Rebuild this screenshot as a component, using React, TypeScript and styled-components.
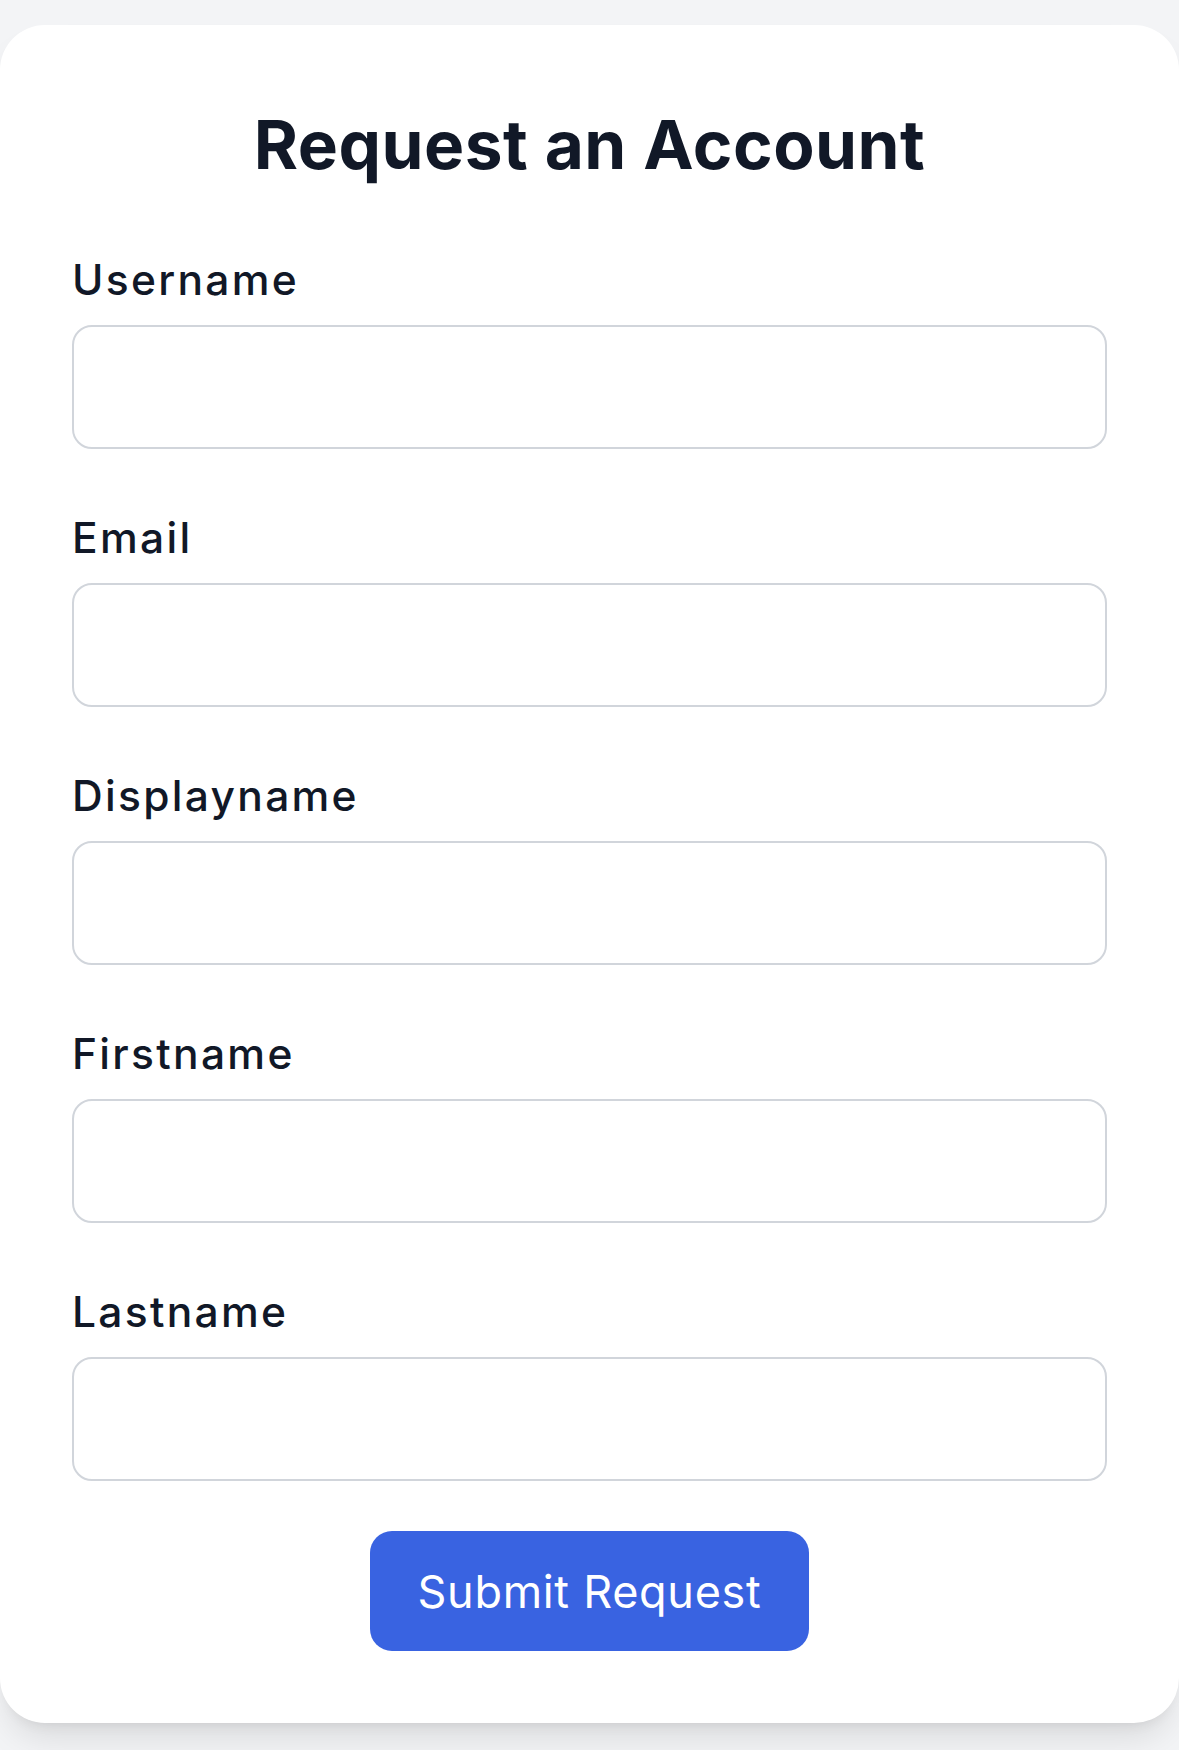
import React from 'react';
import styled, { createGlobalStyle } from 'styled-components';

const GlobalStyle = createGlobalStyle`
  html, body {
    margin: 0;
    padding: 0;
    background-color: #f3f4f6;
    font-family: Inter, "Noto Sans", "Liberation Sans", sans-serif;
  }
  * {
    box-sizing: border-box;
  }
`;

const fields = ['Username', 'Email', 'Displayname', 'Firstname', 'Lastname'];

const App: React.FC = () => {
  return (
    <>
      <GlobalStyle />
      <Page>
        <Card>
          <Title>Request an Account</Title>
          <Form onSubmit={(e) => e.preventDefault()}>
            <Fields>
              {fields.map((name) => (
                <Field key={name}>
                  <Label htmlFor={name.toLowerCase()}>{name}</Label>
                  <Input id={name.toLowerCase()} type={name === 'Email' ? 'email' : 'text'} />
                </Field>
              ))}
            </Fields>
            <ButtonRow>
              <SubmitButton type="submit">Submit Request</SubmitButton>
            </ButtonRow>
          </Form>
        </Card>
      </Page>
    </>
  );
};

// 样式组件
const Page = styled.div`
  padding-top: 25px;
  padding-bottom: 27px;
`;

const Card = styled.div`
  background-color: white;
  border-radius: 45px;
  padding: 79px 72px 72px;
  box-shadow: 0 22px 34px -7px rgba(0, 0, 0, 0.1), 0 9px 14px -9px rgba(0, 0, 0, 0.1);
`;

const Title = styled.h1`
  margin: 0 0 64px;
  text-align: center;
  color: #111827;
  font-size: 67.5px;
  line-height: 81px;
  font-weight: 700;
  letter-spacing: 0.5px;
`;

const Form = styled.form`
  display: flex;
  flex-direction: column;
`;

const Fields = styled.div`
  display: flex;
  flex-direction: column;
  gap: 58px;
`;

const Field = styled.div`
  display: flex;
  flex-direction: column;
`;

const Label = styled.label`
  display: block;
  color: #111827;
  font-size: 42.5px;
  line-height: 61px;
  font-weight: 500;
  letter-spacing: 2.3px;
  margin-bottom: 15px;
`;

const Input = styled.input`
  width: 100%;
  height: 124px;
  border: 2px solid #d1d5db;
  border-radius: 20px;
  background: white;
  padding: 0 27px;
  font-family: inherit;
  font-size: 40px;
  color: #111827;
  outline: none;
`;

const ButtonRow = styled.div`
  display: flex;
  justify-content: center;
  margin-top: 50px;
`;

const SubmitButton = styled.button`
  height: 120px;
  padding: 0 48px;
  border: none;
  border-radius: 22px;
  background-color: #3963e1;
  color: white;
  font-family: inherit;
  font-size: 45px;
  font-weight: 400;
  letter-spacing: 0.7px;
  cursor: pointer;
`;

export default App;
